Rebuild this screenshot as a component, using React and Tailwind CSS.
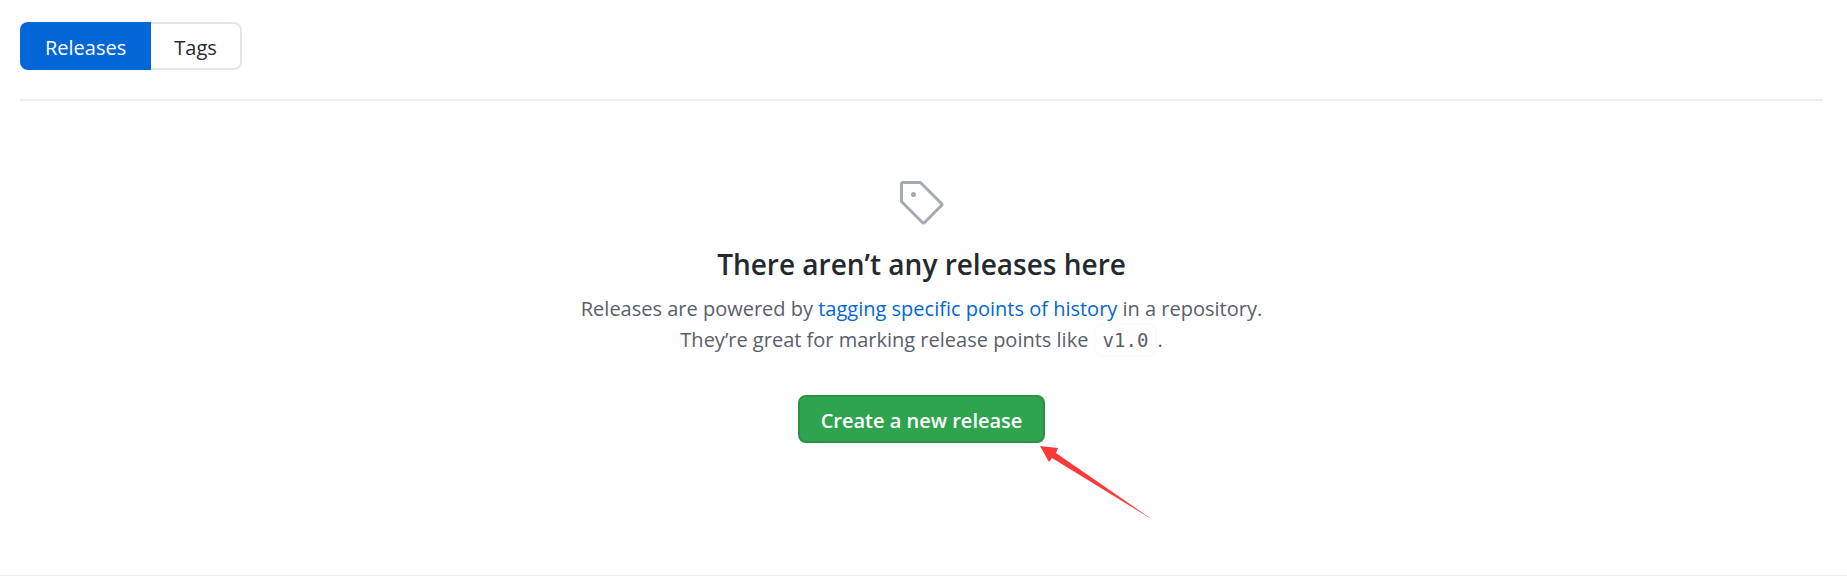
function TagIcon() {
  return (
    <svg
      viewBox="0 0 24 24"
      width="48"
      height="48"
      fill="currentColor"
      aria-hidden="true"
      className="text-[#a3aab1]"
    >
      <path d="M7.75 6.5a1.25 1.25 0 1 0 0 2.5 1.25 1.25 0 0 0 0-2.5z" />
      <path
        fillRule="evenodd"
        d="M2.5 1A1.5 1.5 0 0 0 1 2.5v8.44c0 .397.158.779.44 1.06l10.25 10.25a1.5 1.5 0 0 0 2.12 0l8.44-8.44a1.5 1.5 0 0 0 0-2.12L12 1.44A1.5 1.5 0 0 0 10.94 1H2.5zm0 1.5h8.44l10.25 10.25-8.44 8.44L2.5 10.94V2.5z"
      />
    </svg>
  );
}

function Arrow() {
  return (
    <svg
      viewBox="0 0 113 75"
      width="113"
      height="75"
      aria-hidden="true"
      className="pointer-events-none absolute top-full left-full -ml-[5px] mt-[3px] max-w-none"
    >
      <path fill="#fc3838" d="M0 0l18 2-2 5L113 74 12 12 9 16z" />
    </svg>
  );
}

export default function App() {
  return (
    <main className="border-b border-[#ececec] bg-white pt-[22px] pr-6 pb-[132px] pl-5 font-['Open_Sans','Noto_Sans',sans-serif] text-[#24292e]">
      <nav aria-label="Releases and tags" className="flex text-xl leading-6 font-medium">
        <a
          href="#releases"
          aria-current="page"
          className="flex h-12 items-center rounded-l-lg bg-[#0366d6] px-[25px] pt-[3px] text-white"
        >
          Releases
        </a>
        <a
          href="#tags"
          className="flex h-12 items-center rounded-r-lg border-2 border-l-0 border-[#e1e4e8] px-[23px] pt-[3px]"
        >
          Tags
        </a>
      </nav>

      <section className="mt-[29px] flex flex-col items-center border-t-2 border-[#eaecef] pt-[78px] text-center">
        <TagIcon />
        <h1 className="mt-4 text-[28px] leading-[42px] font-semibold">
          There aren’t any releases here
        </h1>
        <p className="mt-2 text-xl leading-[31px] text-[#586069]">
          Releases are powered by{" "}
          <a href="#tagging" className="text-[#0366d6]">
            tagging specific points of history
          </a>{" "}
          in a repository.
          <br />
          They’re great for marking release points like{" "}
          <code className="rounded-lg border-2 border-[#fafbfc] px-[7px] py-1 font-['DejaVu_Sans_Mono',monospace] text-[19px] leading-6">
            v1.0
          </code>
          .
        </p>
        <div className="relative mt-10">
          <button
            type="button"
            className="h-12 rounded-lg border-2 border-[#2a9147] bg-[#2ea44f] px-[21px] pt-[3px] text-xl leading-6 font-semibold text-white shadow-xs"
          >
            Create a new release
          </button>
          <Arrow />
        </div>
      </section>
    </main>
  );
}
